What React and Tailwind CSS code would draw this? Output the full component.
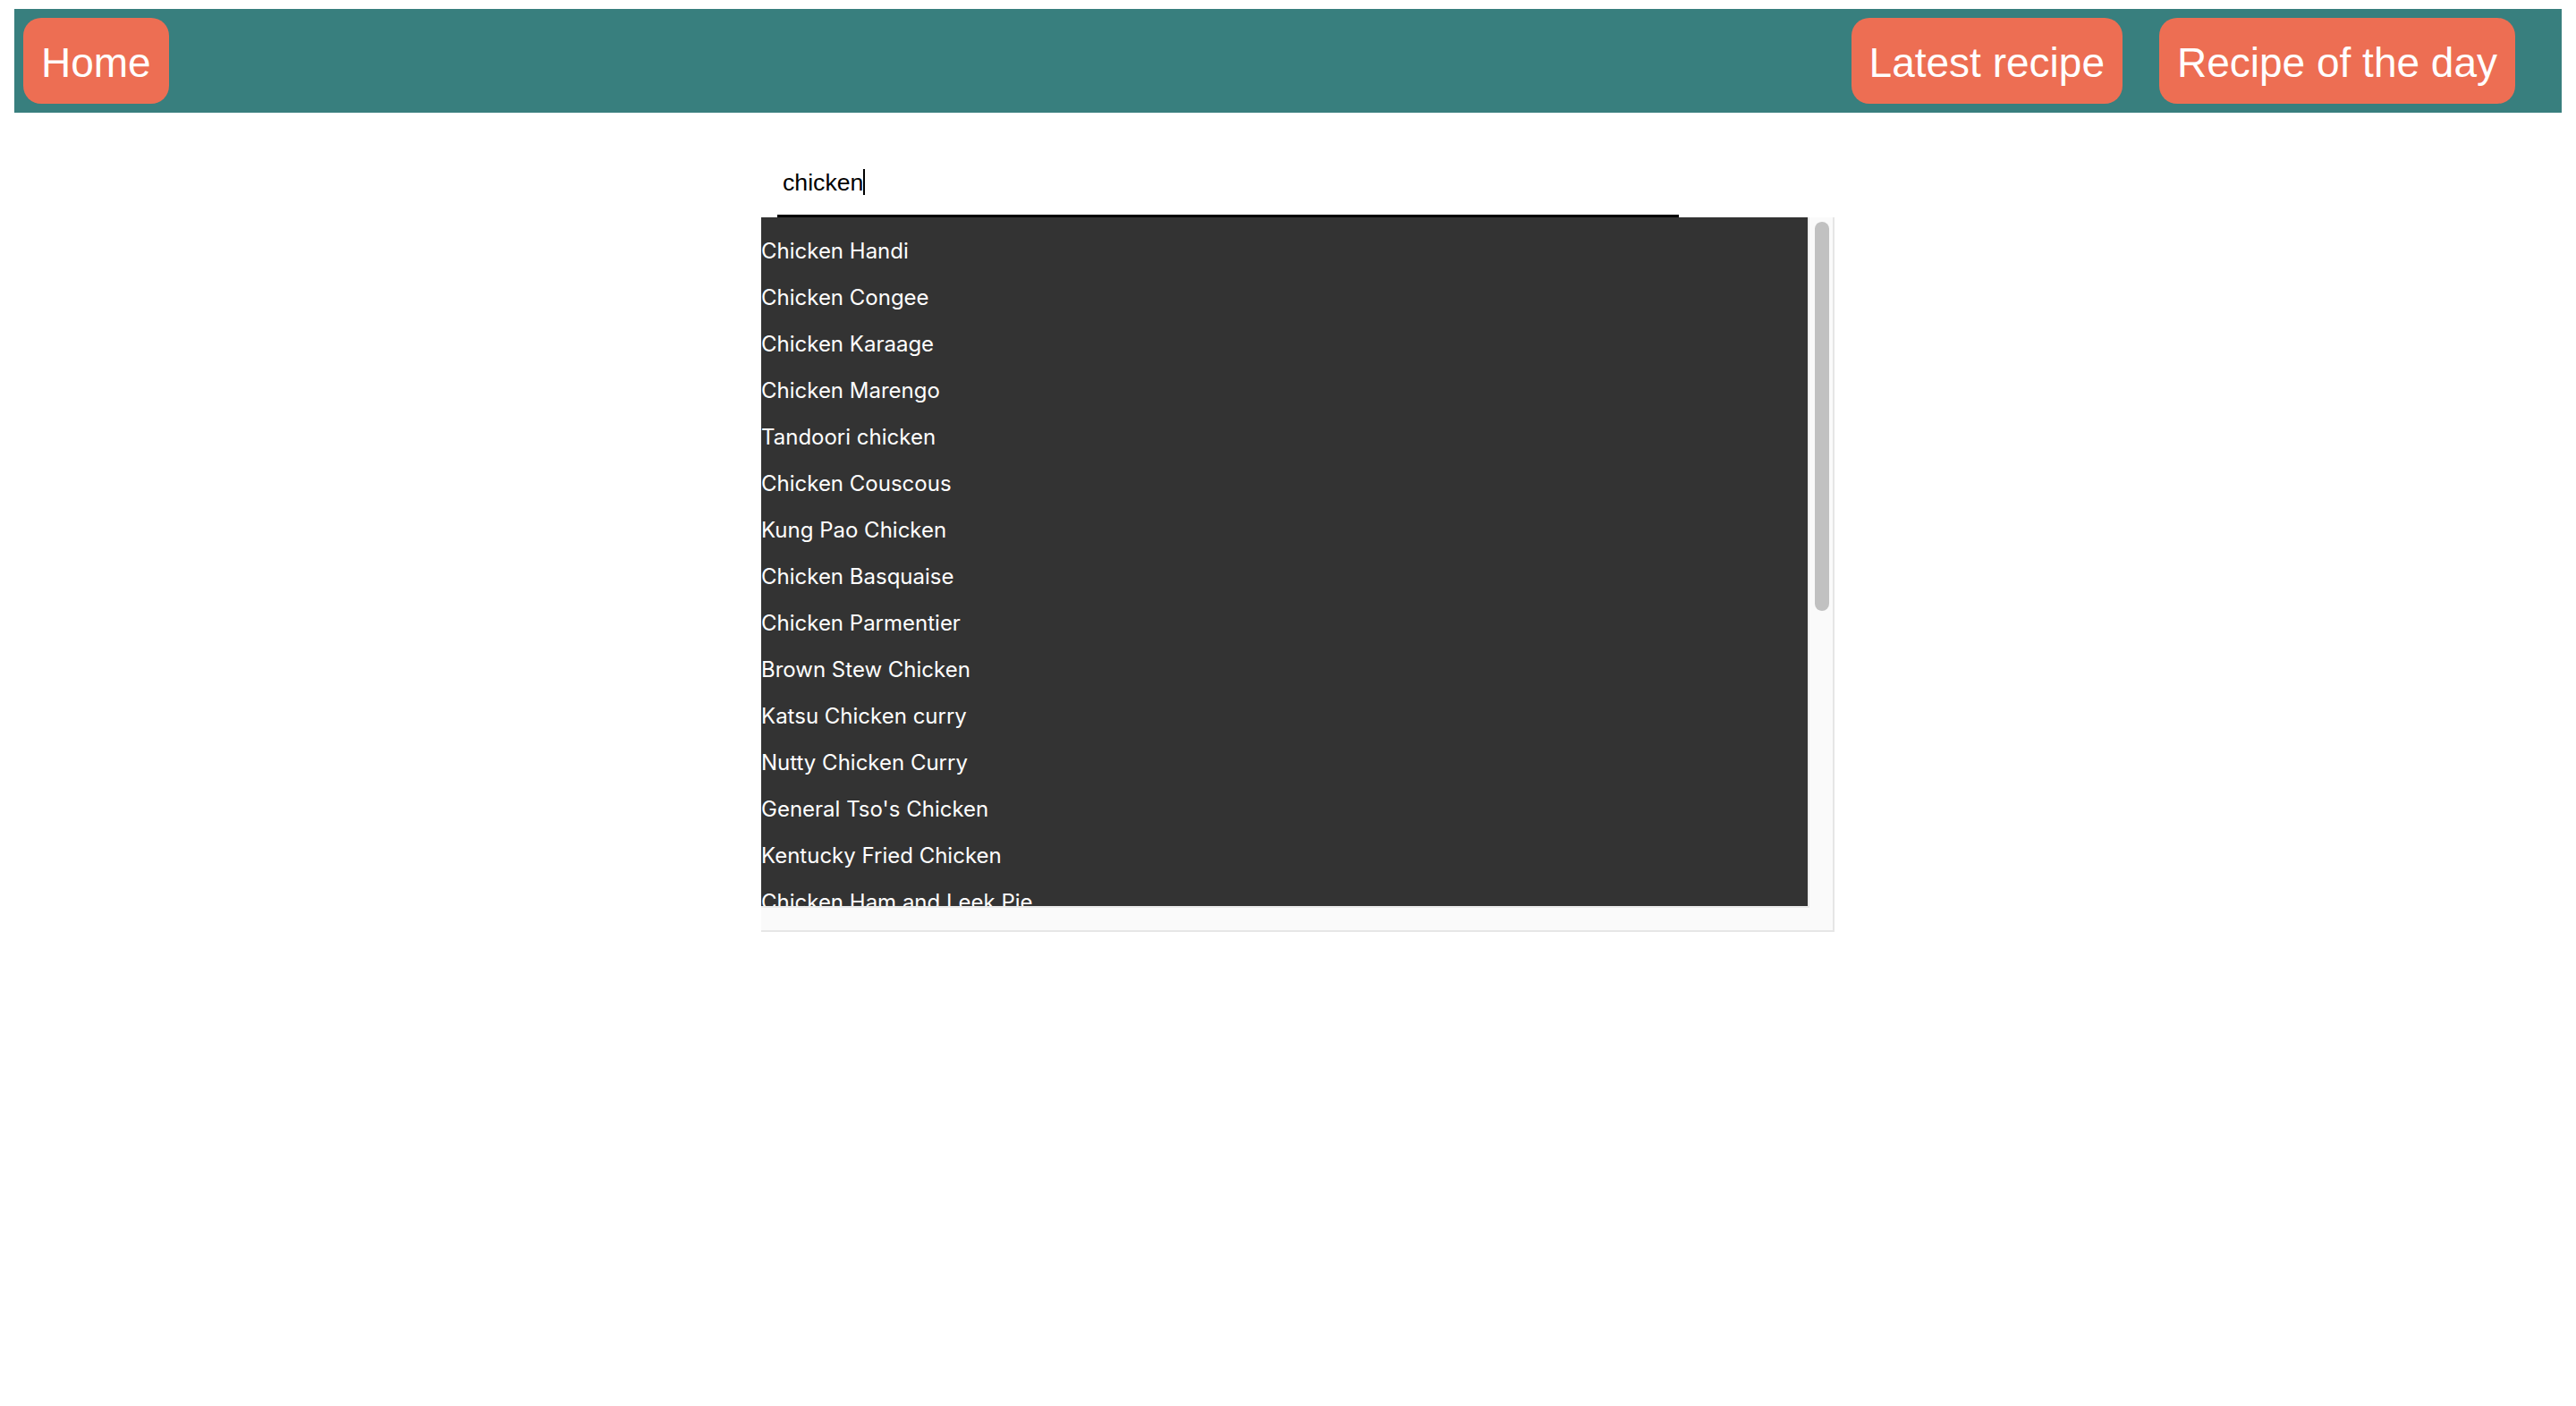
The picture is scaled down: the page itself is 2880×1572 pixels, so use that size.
import { useState } from 'react';

const recipes = [
    'Chicken Handi',
    'Chicken Congee',
    'Chicken Karaage',
    'Chicken Marengo',
    'Tandoori chicken',
    'Chicken Couscous',
    'Kung Pao Chicken',
    'Chicken Basquaise',
    'Chicken Parmentier',
    'Brown Stew Chicken',
    'Katsu Chicken curry',
    'Nutty Chicken Curry',
    "General Tso's Chicken",
    'Kentucky Fried Chicken',
    'Chicken Ham and Leek Pie',
    'Chicken Enchilada Casserole',
];

function NavButton({ children }) {
    return (
        <button className="h-[96px] px-[20px] pt-[3px] rounded-[20px] bg-[#ed6e53] text-white text-[46px] leading-none font-['Liberation_Sans',Arial,sans-serif]">
            {children}
        </button>
    );
}

export default function App() {
    const [query] = useState('chicken');

    return (
        <div className="min-h-screen bg-white">
            {/* top bar */}
            <header className="mx-[16px] mt-[10px] h-[116px] bg-[#387f7e] flex items-center justify-between pl-[10px] pr-[52px]">
                <NavButton>Home</NavButton>
                <div className="flex items-center gap-[41px]">
                    <NavButton>Latest recipe</NavButton>
                    <NavButton>Recipe of the day</NavButton>
                </div>
            </header>

            {/* search */}
            <div className="ml-[851px] mt-[44px] w-[1200px]">
                <div className="ml-[18px] w-[1008px] h-[73px] border-b-[3px] border-black flex items-center pl-[6px] pb-[3px]">
                    <span className="text-[26.67px] text-black font-['Liberation_Sans',Arial,sans-serif]">{query}</span>
                    <span className="w-[2px] h-[29px] bg-black" />
                </div>

                {/* results, with scroll tracks */}
                <div className="w-[1200px] bg-[#fafafa] border-r-2 border-b-2 border-[#e6e6e6]">
                    <div className="flex">
                        <div className="w-[1170px] h-[770px] bg-[#333333] border-r-2 border-b-2 border-[#ebebeb] box-content overflow-hidden font-['Inter',sans-serif]">
                            <ul className="pt-[12px]">
                                {recipes.map((r) => (
                                    <li key={r} className="h-[52px] flex items-center text-[24px] text-white whitespace-nowrap">
                                        {r}
                                    </li>
                                ))}
                            </ul>
                        </div>
                        <div className="flex-1 pl-[6px] pt-[5px]">
                            <div className="w-[16px] h-[435px] rounded-full bg-[#c1c1c1]" />
                        </div>
                    </div>
                    <div className="h-[25px]" />
                </div>
            </div>
        </div>
    );
}
